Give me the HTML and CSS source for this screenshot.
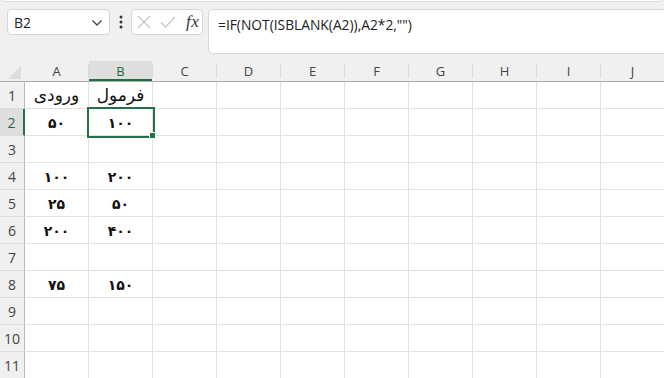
FILE: index.html
```html
<!DOCTYPE html>
<html lang="fa">
<head>
  <meta charset="UTF-8" />
  <title>Sheet</title>
  <link rel="stylesheet" href="styles.css">
</head>
<body>

  <div class="ribbon-edge"></div>

  <div class="formula-bar">
    <div class="name-box">
      <span>B2</span>
      <svg class="chevron" width="12" height="8" viewBox="0 0 12 8"><path d="M1.5 1.5 L6 6 L10.5 1.5" fill="none" stroke="#444" stroke-width="1.3"/></svg>
    </div>
    <div class="grip">
      <svg width="4" height="14" viewBox="0 0 4 14"><circle cx="2" cy="2" r="1.5" fill="#333"/><circle cx="2" cy="7" r="1.5" fill="#333"/><circle cx="2" cy="12" r="1.5" fill="#333"/></svg>
    </div>
    <div class="fx-buttons">
      <svg width="14" height="14" viewBox="0 0 14 14"><path d="M1 1 L13 13 M13 1 L1 13" stroke="#c4c4c4" stroke-width="1.2" fill="none"/></svg>
      <svg width="16" height="14" viewBox="0 0 16 14"><path d="M1 7.5 L5.5 12 L15 2" stroke="#c4c4c4" stroke-width="1.2" fill="none"/></svg>
      <span class="fx">fx</span>
    </div>
    <div class="formula-box">=IF(NOT(ISBLANK(A2)),A2*2,"")</div>
  </div>

  <div class="sheet">
    <div class="corner"><span class="corner-tri"></span></div>
    <div class="col-head"><span>A</span></div>
    <div class="col-head active"><span>B</span></div>
    <div class="col-head"><span>C</span></div>
    <div class="col-head"><span>D</span></div>
    <div class="col-head"><span>E</span></div>
    <div class="col-head"><span>F</span></div>
    <div class="col-head"><span>G</span></div>
    <div class="col-head"><span>H</span></div>
    <div class="col-head"><span>I</span></div>
    <div class="col-head"><span>J</span></div>

    <div class="row-head">1</div>
    <div class="cell">ورودی</div><div class="cell">فرمول</div>
    <div class="cell"></div><div class="cell"></div><div class="cell"></div><div class="cell"></div><div class="cell"></div><div class="cell"></div><div class="cell"></div><div class="cell"></div>

    <div class="row-head active">2</div>
    <div class="cell num">۵۰</div><div class="cell num selected">۱۰۰</div>
    <div class="cell"></div><div class="cell"></div><div class="cell"></div><div class="cell"></div><div class="cell"></div><div class="cell"></div><div class="cell"></div><div class="cell"></div>

    <div class="row-head">3</div>
    <div class="cell"></div><div class="cell"></div>
    <div class="cell"></div><div class="cell"></div><div class="cell"></div><div class="cell"></div><div class="cell"></div><div class="cell"></div><div class="cell"></div><div class="cell"></div>

    <div class="row-head">4</div>
    <div class="cell num">۱۰۰</div><div class="cell num">۲۰۰</div>
    <div class="cell"></div><div class="cell"></div><div class="cell"></div><div class="cell"></div><div class="cell"></div><div class="cell"></div><div class="cell"></div><div class="cell"></div>

    <div class="row-head">5</div>
    <div class="cell num">۲۵</div><div class="cell num">۵۰</div>
    <div class="cell"></div><div class="cell"></div><div class="cell"></div><div class="cell"></div><div class="cell"></div><div class="cell"></div><div class="cell"></div><div class="cell"></div>

    <div class="row-head">6</div>
    <div class="cell num">۲۰۰</div><div class="cell num">۴۰۰</div>
    <div class="cell"></div><div class="cell"></div><div class="cell"></div><div class="cell"></div><div class="cell"></div><div class="cell"></div><div class="cell"></div><div class="cell"></div>

    <div class="row-head">7</div>
    <div class="cell"></div><div class="cell"></div>
    <div class="cell"></div><div class="cell"></div><div class="cell"></div><div class="cell"></div><div class="cell"></div><div class="cell"></div><div class="cell"></div><div class="cell"></div>

    <div class="row-head">8</div>
    <div class="cell num">۷۵</div><div class="cell num">۱۵۰</div>
    <div class="cell"></div><div class="cell"></div><div class="cell"></div><div class="cell"></div><div class="cell"></div><div class="cell"></div><div class="cell"></div><div class="cell"></div>

    <div class="row-head">9</div>
    <div class="cell"></div><div class="cell"></div>
    <div class="cell"></div><div class="cell"></div><div class="cell"></div><div class="cell"></div><div class="cell"></div><div class="cell"></div><div class="cell"></div><div class="cell"></div>

    <div class="row-head">10</div>
    <div class="cell"></div><div class="cell"></div>
    <div class="cell"></div><div class="cell"></div><div class="cell"></div><div class="cell"></div><div class="cell"></div><div class="cell"></div><div class="cell"></div><div class="cell"></div>

    <div class="row-head">11</div>
    <div class="cell"></div><div class="cell"></div>
    <div class="cell"></div><div class="cell"></div><div class="cell"></div><div class="cell"></div><div class="cell"></div><div class="cell"></div><div class="cell"></div><div class="cell"></div>
  </div>

</body>
</html>
```

FILE: styles.css
```css
body {
  margin: 0;
  background: #f0f0f0;
  font-family: "Open Sans", "Noto Sans", sans-serif;
  color: #222;
  overflow: hidden;
  height: 378px;
}

.ribbon-edge {
  height: 1px;
  margin: 0 4px;
  background: #fff;
  border: 1px solid #dadada;
  border-top: none;
  border-radius: 0 0 6px 6px;
}

.formula-bar {
  display: flex;
  align-items: flex-start;
  padding: 7px 0 0 7px;
  height: 46px;
}

.name-box {
  height: 24px;
  width: 89px;
  background: #fff;
  border: 1px solid #d6d6d6;
  border-radius: 4px;
  display: flex;
  align-items: center;
  justify-content: space-between;
  padding: 0 6px;
  font-size: 14px;
  color: #222;
}

.chevron {
  margin-top: 2px;
}

.grip {
  width: 21px;
  height: 26px;
  display: flex;
  align-items: center;
  justify-content: center;
}

.fx-buttons {
  width: 72px;
  height: 26px;
  box-sizing: border-box;
  background: #fff;
  border: 1px solid #d6d6d6;
  border-radius: 4px;
  display: flex;
  align-items: center;
  gap: 9px;
  padding-left: 5px;
}

.fx {
  font-family: "Liberation Serif", serif;
  font-style: italic;
  font-size: 17px;
  color: #333;
  margin-left: 1px;
  letter-spacing: 0.5px;
}

.formula-box {
  flex: 1;
  margin-left: 5px;
  margin-right: -8px;
  height: 45px;
  box-sizing: border-box;
  background: #fff;
  border: 1px solid #d6d6d6;
  border-radius: 5px;
  padding: 5px 9px;
  font-size: 13.8px;
  color: #222;
}

.sheet {
  display: grid;
  grid-template-columns: 25px repeat(10, 64px);
  grid-template-rows: 27px;
  grid-auto-rows: 27px;
  background: #fff;
}

.corner,
.col-head {
  background: #f0f0f0;
  border-bottom: 1px solid #a8a8a8;
  display: flex;
  align-items: flex-end;
  position: relative;
}

.corner {
  border-right: 1px solid #f0f0f0;
}

.corner-tri {
  position: absolute;
  left: 8px;
  bottom: 2px;
  width: 0;
  height: 0;
  border-left: 13px solid transparent;
  border-bottom: 13px solid #dcdcdc;
}

.col-head span {
  flex: 1;
  height: 20px;
  display: flex;
  align-items: center;
  justify-content: center;
  font-size: 13px;
  color: #444;
  border-right: 1px solid #f0f0f0;
}

.col-head::after {
  content: "";
  position: absolute;
  right: 0;
  top: 9px;
  bottom: 3px;
  width: 1px;
  background: #d8d8d8;
}

.col-head.active span {
  background: #dedede;
  color: #1e6b41;
  box-shadow: inset 0 -2px 0 #217346;
}

.row-head {
  background: #f0f0f0;
  border-right: 1px solid #b8b8b8;
  border-bottom: 1px solid #dcdcdc;
  display: flex;
  align-items: flex-end;
  justify-content: center;
  padding-bottom: 3px;
  box-sizing: border-box;
  font-size: 14px;
  color: #444;
}

.row-head.active {
  background: #dedede;
  color: #1e6b41;
  border-right: 2px solid #217346;
}

.cell {
  border-right: 1px solid #e1e1e1;
  border-bottom: 1px solid #e1e1e1;
  box-sizing: border-box;
  display: flex;
  align-items: flex-end;
  justify-content: center;
  padding-bottom: 3px;
  font-family: "DejaVu Sans", sans-serif;
  font-size: 17px;
  color: #111;
  direction: rtl;
}

.cell.num {
  direction: ltr;
  font-size: 14px;
  font-weight: bold;
  padding-bottom: 4px;
}

.cell.selected {
  position: relative;
  z-index: 1;
  outline: 2px solid #217346;
}

.cell.selected::after {
  content: "";
  position: absolute;
  right: -4px;
  bottom: -4px;
  width: 5px;
  height: 5px;
  background: #217346;
  border: 1px solid #fff;
}
```
